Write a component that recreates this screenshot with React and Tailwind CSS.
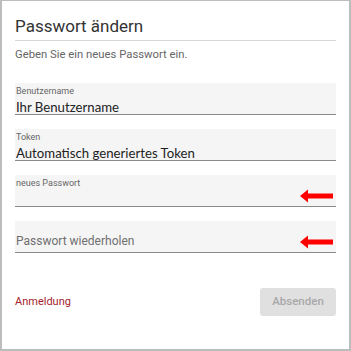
import React from 'react';

const Arrow = () => (
  <svg width="34" height="14" viewBox="0 0 34 14" className="shrink-0">
    <path d="M0 7 L8 0.5 L8 4.5 L33 4.5 L33 9.5 L8 9.5 L8 13.5 Z" fill="#ff0000" />
  </svg>
);

const Field = ({ label, value, placeholder, arrow }) => (
  <div className="h-[32px] bg-[#f5f5f5] border-b border-[#8a8a8a] relative flex flex-col px-[1px]">
    {label && (
      <span className="text-[9px] leading-[10px] text-[#666] pt-[3px]">{label}</span>
    )}
    {value && (
      <span className="text-[13.2px] leading-[16px] text-[#222] mt-[3px] font-['Lato',sans-serif]">
        {value}
      </span>
    )}
    {placeholder && (
      <span className="text-[12px] leading-[14px] text-[#6f6f6f] mt-auto mb-[4px]">{placeholder}</span>
    )}
    {arrow && (
      <div className="absolute right-[2px] bottom-[3px]">
        <Arrow />
      </div>
    )}
  </div>
);

export default function App() {
  return (
    <div className="w-[351px] h-[351px] bg-white border-l-2 border-r-2 border-b-2 border-t border-[#bdbdbd] font-['Roboto',sans-serif] flex flex-col px-[13px]">
      <h1 className="text-[17px] leading-[20px] text-[#333] pt-[15px] pb-[4px] border-b border-[#d8d8d8]">
        Passwort ändern
      </h1>
      <p className="text-[11.3px] leading-[14px] text-[#666] mt-[7px]">Geben Sie ein neues Passwort ein.</p>

      <div className="flex flex-col gap-[14px] mt-[21px]">
        <Field label="Benutzername" value="Ihr Benutzername" />
        <Field label="Token" value="Automatisch generiertes Token" />
        <Field label="neues Passwort" arrow />
        <Field placeholder="Passwort wiederholen" arrow />
      </div>

      <div className="flex items-center justify-between mt-[35px]">
        <a className="text-[11px] text-[#a51d2d]">Anmeldung</a>
        <button className="w-[76px] h-[28px] rounded-[3px] bg-[#e0e0e0] text-[11.5px] font-medium text-[#a8a8a8]">
          Absenden
        </button>
      </div>
    </div>
  );
}
